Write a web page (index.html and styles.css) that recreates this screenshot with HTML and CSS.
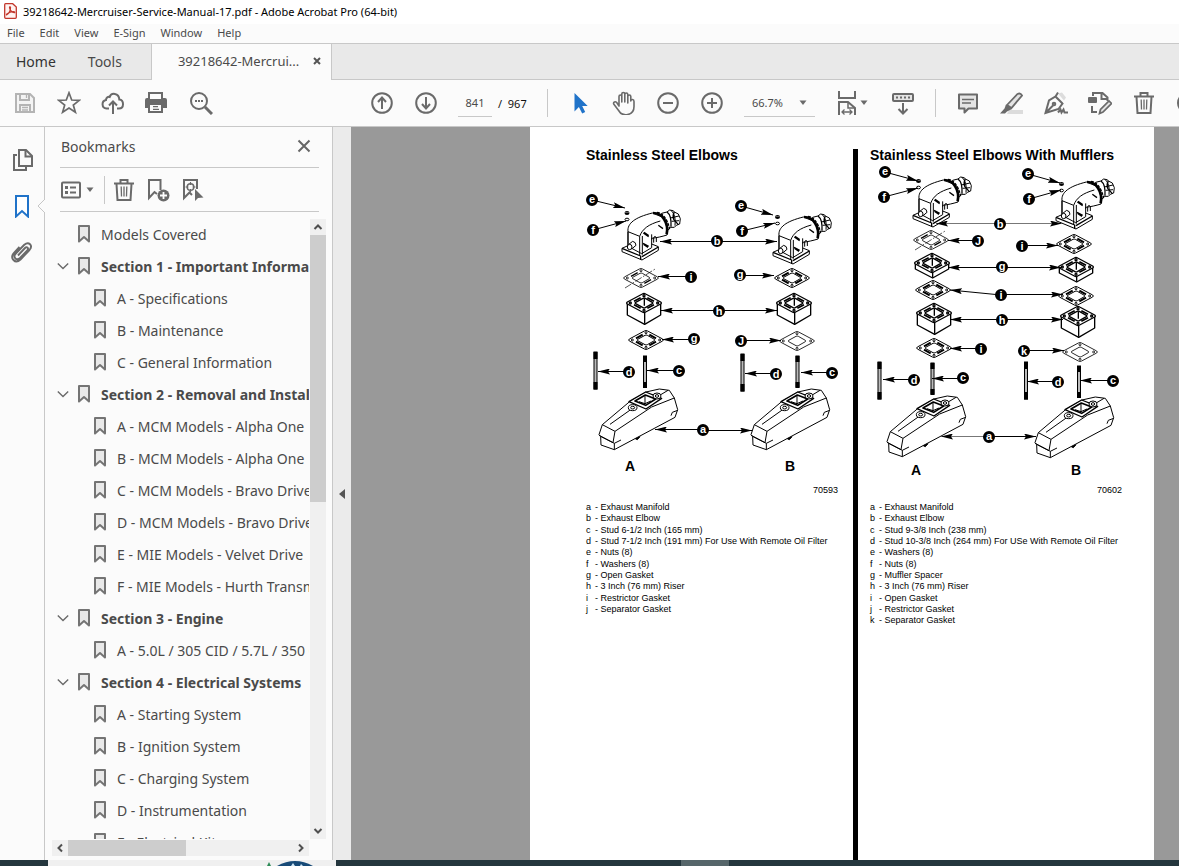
FILE: index.html
```html
<!DOCTYPE html>
<html lang="en">
<head>
<meta charset="utf-8">
<title>39218642-Mercruiser-Service-Manual-17.pdf - Adobe Acrobat Pro (64-bit)</title>
<link rel="stylesheet" href="styles.css">
</head>
<body>
<svg class="sprite" aria-hidden="true">
  <defs>
    <symbol id="i-mark" viewBox="0 0 14 20"><path d="M2 2h10v15.500l-5-4.500-5 4.500z" fill="#e9e9e9" stroke="#747474" stroke-width="2" stroke-linejoin="round"/></symbol>
    <symbol id="i-chev" viewBox="0 0 12 12"><path d="M.8 3.500 6 8.500 11.200 3.500" fill="none" stroke="#6a6a6a" stroke-width="1.400"/></symbol>
    <symbol id="i-caret" viewBox="0 0 8 6"><path d="M.5.500h7L4 5z" fill="#6a6a6a"/></symbol>
    <symbol id="i-trash" viewBox="0 0 24 24"><g fill="none" stroke="#6a6a6a" stroke-width="2"><path d="M2 5.500h20M8.500 5V2h7v3M4.500 6l1 16h13l1-16"/><path d="M9.200 8.500l.3 10M12 8.500v10M14.800 8.500l-.3 10" stroke-width="1.300"/></g></symbol>
    <marker id="head" viewBox="0 0 12 6" refX="12" refY="3" markerWidth="12" markerHeight="6" markerUnits="userSpaceOnUse" orient="auto"><path d="M0 0 12 3 0 6 2 3z"/></marker>

    <g id="elbow"><g transform="scale(.3333) translate(-127 -210)" fill="#fff" stroke="#000" stroke-width="3" stroke-linejoin="round">
      <path d="M246 220 262 216 270 210 280 212 286 217 296 222 302 236 300 252 290 256 284 262 272 262 266 270z"/>
      <path d="M262 216q14 10 12 44M284 216q-6 10-2 22l14 16" fill="none" stroke-width="4"/>
      <path d="M274 211q16 14 12 46M272 234l26-6M276 244l22-2" fill="none"/>
      <path d="M127 325 147 316 216 312 236 320v11l-49 29-60-25z"/>
      <path d="M127 325l56 23v11M187 350l49-29" fill="none" stroke-width="4"/>
      <path d="M145 275C142 250 166 232 218 219l34 14c13 20 14 35 10 52-16 5-30 8-46 10v28l-30 18-41-22z"/>
      <path d="M145 275l35 14v56M188 288v56M180 289c8-22 26-36 62-46M145 275v42M216 299v-16" fill="none"/>
      <path d="M220 219c14 0 26 6 33 18 9 14 12 28 8 46" fill="none" stroke-width="8"/>
      <path d="M232 217c14 2 30 16 38 50" fill="none" stroke-width="4" stroke-dasharray="9 3"/>
      <path d="M222 308v-14q4-10 8 0v12" fill="none"/>
      <path d="M191 279l16 11M236 256l14 10M190 310l17 9M193 277l14 10M192 313l13 9" stroke-width="4" fill="none"/>
      <path d="M145 315l14-11q10 2 10 12l-13 11z"/><ellipse cx="150" cy="321" rx="7" ry="8"/>
    </g></g>

    <g id="plate"><path d="M-50-3-5-27Q0-30 5-27L50-3Q54 0 50 3L5 27Q0 30-5 27L-50 3Q-54 0-50-3z"/><path d="M-25-2-3-14Q0-16 4-14L25-2Q28 0 25 2L4 14Q0 16-3 14L-25 2Q-28 0-25-2z"/><g fill="#fff"><circle cx="-41" r="3"/><circle cx="41" r="3"/><circle cy="-22" r="3"/><circle cy="22" r="3"/></g></g>
    <g id="gasket-thin"><g transform="scale(.3333)" fill="#fff" stroke="#000" stroke-width="2.500"><use href="#plate"/></g></g>
    <g id="gasket"><g transform="scale(.3333)" fill="#fff" stroke="#000" stroke-width="3"><use href="#plate"/><path d="M-30-5-10-16M10-16 30-5M-30 5-10 16M10 16 30 5" stroke-width="6"/></g></g>
    <g id="gasket-cut"><g transform="scale(.3333)" fill="#fff" stroke="#000" stroke-width="2.500"><use href="#plate"/><path d="M-30-5-10-16M10 16 30 5" stroke-width="4"/><path d="M-48 30 44-28" stroke-dasharray="22 5 5 5" stroke-width="2"/></g></g>
    <g id="riser"><g transform="scale(.3333)" fill="#fff" stroke="#000" stroke-width="4" stroke-linejoin="round"><path d="M-50 0v36l52 28 48-28V0z"/><path d="M2 28v34"/><use href="#plate"/><path d="M-30-5-10-16M10-16 30-5M-30 5-10 16M10 16 30 5" stroke-width="5"/><path d="M1-14v22"/></g></g>
    <g id="spacer"><g transform="scale(.3333)" fill="#fff" stroke="#000" stroke-width="4" stroke-linejoin="round"><path d="M-50 0v18l52 27 48-27V0z"/><path d="M2 28v16"/><use href="#plate"/><path d="M-30-5-10-16M10-16 30-5M-30 5-10 16M10 16 30 5" stroke-width="5"/><path d="M1-14v22"/></g></g>
    <g id="stud"><rect x="-1.500" width="3" height="37" fill="#bbb" stroke="#000"/><path d="M-2 0h4v7h-4zM-2 30h4v7.500h-4z"/></g>
    <g id="stud-short"><rect x="-1.500" width="3" height="31" fill="#bbb" stroke="#000"/><path d="M-2 0h4v6h-4zM-2 26h4v6h-4z"/></g>
    <g id="nuts"><ellipse rx="2.500" ry="2"/><path d="M-2-.5h4" stroke="#999" stroke-width=".6"/><ellipse cy="6.500" rx="2" ry="1.300" fill="#fff" stroke="#000"/></g>

    <g id="manifold"><g transform="scale(.3333) translate(-57 -208)" fill="#fff" stroke="#000" stroke-width="3" stroke-linejoin="round">
      <path d="M160 354l12 6 8-9z" fill="#000"/>
      <path d="M57 345 67 315 150 245 198 217 238 208 268 212 283 235 293 270 285 293 103 390 63 376 62 350z"/>
      <path d="M67 315l38 20-6 34-42-22M105 335 215 262 283 235M62 350l41 21v19M103 371l20-10M273 288l4-10 16-6M90 314l62-44M215 225l24 2 25-15" fill="none"/>
      <path d="M147 246 197 217 245 236 198 268z" stroke-width="4"/>
      <path d="M165 244l31-18 31 12-30 19z" fill="none" stroke-width="5"/><path d="M195 228v24l-18-6M195 252l18-8" fill="none"/>
      <ellipse cx="158" cy="264" rx="13" ry="9"/><ellipse cx="158" cy="264" rx="6" ry="4"/>
      <ellipse cx="231" cy="229" rx="12" ry="9"/><ellipse cx="231" cy="229" rx="5" ry="4"/>
    </g></g>
  </defs>
</svg>

<div class="app">
  <header class="titlebar">
    <svg class="app-icon" viewBox="0 0 13 16"><path d="M1.500.7h7.200L12.300 4v10.300q0 1-1 1H1.700q-1 0-1-1V1.700q0-1 .8-1z" fill="#fff3f1" stroke="#c2372c" stroke-width="1.300"/><path d="M2.800 11.800c2-1 4-4.500 3.700-7.300 0-1-1.100-.9-1 0 .2 2.400 2.300 5 4.700 5.200 1-.1.600-1-.3-1-2.200-.1-5 .8-7 2.200-.7.600-.5 1.100-.1.900z" fill="none" stroke="#c2372c" stroke-width="1.200"/></svg>
    <span>39218642-Mercruiser-Service-Manual-17.pdf - Adobe Acrobat Pro (64-bit)</span>
  </header>

  <nav class="menubar" aria-label="Menu">
    <button>File</button><button>Edit</button><button>View</button><button>E-Sign</button><button>Window</button><button>Help</button>
  </nav>

  <div class="tabs">
    <button class="tab-home">Home</button>
    <button class="tab-tools">Tools</button>
    <div class="tab-doc">
      <button>39218642-Mercrui...</button>
      <button class="tab-close" aria-label="Close tab"><svg viewBox="0 0 8 8"><path d="M1 1l6 6M7 1 1 7" stroke="#555" stroke-width="2"/></svg></button>
    </div>
  </div>

  <div class="toolbar">
    <div class="group">
      <button aria-label="Save"><svg viewBox="0 0 24 24"><g fill="none" stroke="#b4b4b4" stroke-width="2"><path d="M3 3h14l4 4v14H3z" fill="#f4f4f4"/><path d="M7 3v6h9V3M7 21v-7h10v7"/><path d="M13.500 4v3M9 16.500h6M9 19h6" stroke-width="1.300"/></g></svg></button>
      <button aria-label="Star"><svg viewBox="0 0 24 24"><path d="M12 1.800l2.700 7.200 7.600.3-6 4.700 2.100 7.300-6.400-4.200-6.400 4.200L7.700 14l-6-4.700 7.600-.3z" fill="none" stroke="#6a6a6a" stroke-width="1.700"/></svg></button>
      <button aria-label="Upload"><svg viewBox="0 0 24 24"><g fill="none" stroke="#6a6a6a" stroke-width="2"><path d="M8 17.500H5.500A4.300 4.300 0 0 1 5 9c0-2.500 2.200-3.600 3.700-3C10 1.500 18 1.500 18.300 8.500c5 .5 5 9-.3 9h-2"/><path d="M12 23V11M8 14.500l4-4 4 4"/></g></svg></button>
      <button aria-label="Print"><svg viewBox="0 0 24 24"><path d="M3 1h15v6h2q2 0 2 2v8h-4v5H3v-5H0V9q0-2 2-2h1z" fill="#6a6a6a"/><path d="M5 3h11v5H5zM5 14h11v6H5z" fill="#fbfbfb"/><path d="M8 15.700h5M8 18.300h6" stroke="#6a6a6a" stroke-width="1.200"/></svg></button>
      <button aria-label="Search"><svg viewBox="0 0 24 24"><g fill="none" stroke="#6a6a6a"><circle cx="10" cy="10" r="8" stroke-width="2"/><path d="M16 16l7 7" stroke-width="3"/><path d="M6 10h2M9 10h2M12 10h2" stroke-width="1.800"/></g></svg></button>
    </div>
    <div class="group group-pages">
      <button aria-label="Previous page"><svg viewBox="0 0 24 24"><g fill="none" stroke="#6a6a6a" stroke-width="2"><circle cx="12" cy="12" r="9.800"/><path d="M12 18V7M8 11l4-4.500 4 4.500"/></g></svg></button>
      <button aria-label="Next page"><svg viewBox="0 0 24 24"><g fill="none" stroke="#6a6a6a" stroke-width="2"><circle cx="12" cy="12" r="9.800"/><path d="M12 6v11M8 13l4 4.500 4-4.500"/></g></svg></button>
      <input id="page-no" class="page-no" value="841"><label class="page-total" for="page-no">/&nbsp; 967</label>
    </div>
    <span class="sep"></span>
    <div class="group group-view">
      <button aria-label="Select"><svg viewBox="0 0 24 24"><path d="M6.500 2v18.500l4.400-4.500 3.300 6.500 3-1.500-3-6h5.500z" fill="#2073c9"/></svg></button>
      <button aria-label="Hand"><svg viewBox="0 0 24 24"><path d="M7 15V5.500c0-2 2.800-2 2.800 0V11 3c0-2 3-2 3 0v8V3.500c0-2 3-2 3 0V12 5.500c0-2 3-2 3 0V10c0-2 3.200-2 3.200.5v5c0 10-12 10-15 4.500L1.700 13c-.7-2 1.700-3 3-1.500z" fill="none" stroke="#6a6a6a" stroke-width="1.600" stroke-linejoin="round"/></svg></button>
      <button aria-label="Zoom out"><svg viewBox="0 0 24 24"><g fill="none" stroke="#6a6a6a" stroke-width="2"><circle cx="12" cy="12" r="9.800"/><path d="M7 12h10"/></g></svg></button>
      <button aria-label="Zoom in"><svg viewBox="0 0 24 24"><g fill="none" stroke="#6a6a6a" stroke-width="2"><circle cx="12" cy="12" r="9.800"/><path d="M7 12h10M12 7v10"/></g></svg></button>
    </div>
    <div class="zoom">
      <select aria-label="Zoom level"><option>66.7%</option></select>
      <svg class="caret"><use href="#i-caret"/></svg>
    </div>
    <div class="group group-fit">
      <button aria-label="Fit width" class="wide"><svg viewBox="0 0 24 26"><g fill="none" stroke="#6a6a6a" stroke-width="2"><path d="M4 1v7h16V1M4 25V12h9l7 6v7"/><path d="M13 12v6h7" stroke-width="1.500"/><path d="M7 22h10M9.500 19.500 7 22l2.500 2.500M14.500 19.500 17 22l-2.500 2.500" stroke-width="1.300"/></g></svg><svg class="caret"><use href="#i-caret"/></svg></button>
      <button aria-label="Scroll mode"><svg viewBox="0 0 24 24"><g fill="none" stroke="#6a6a6a" stroke-width="2"><rect x="2" y="3" width="20" height="7" rx="1" fill="#e4e4e4"/><path d="M5 6.500h14" stroke-dasharray="2 2"/><path d="M12 12v10M7.500 18l4.500 4.500 4.500-4.500"/></g></svg></button>
    </div>
    <span class="sep"></span>
    <div class="group group-edit">
      <button aria-label="Comment"><svg viewBox="0 0 24 24"><path d="M3 3.500h18v14h-8.500l-4 4v-4H3z" fill="#e4e4e4" stroke="#6a6a6a" stroke-width="2" stroke-linejoin="round"/><path d="M6 8.500h12M6 12h9" stroke="#6a6a6a" stroke-width="1.500"/></svg></button>
      <button aria-label="Highlight"><svg viewBox="0 0 24 24"><path d="M9 19h14v4H7z" fill="#dcdcdc"/><path d="M7 14 17.500 3q3-1.500 4.500 1.500L11.500 17z" fill="#e4e4e4" stroke="#6a6a6a" stroke-width="1.800"/><path d="M6 13.500 12 18l-5 2.500-2 2H0l4.500-5z" fill="#6a6a6a"/></svg></button>
      <button aria-label="Sign"><svg viewBox="0 0 24 24"><path d="M14 2.500l4-1 4 5-2 3z" fill="#dcdcdc"/><g fill="none" stroke="#6a6a6a" stroke-width="2"><path d="M11.500 5.500l7 7-4 5.500L1.500 22 5 9.500zM14 1.500l-2.500 4 7 7M2 21.500l7-7"/><circle cx="10" cy="13" r="1.300"/><path d="M14 21.500l2.500-3 1 3 2-3 1 3H24"/></g></svg></button>
      <button aria-label="Edit"><svg viewBox="0 0 24 24"><g fill="none" stroke="#6a6a6a" stroke-width="2"><path d="M5 5V2h9.500l5 4.500V10M4 15v6h5M13.500 2.500V8h6"/><path d="M11.500 22.500l1-4L21 10l2.500 2.500L15 21z" fill="#e4e4e4" stroke-width="1.700"/></g><rect x="0" y="6" width="9" height="6" rx="1" fill="#6a6a6a"/></svg></button>
      <button aria-label="Delete"><svg><use href="#i-trash"/></svg></button>
      <button aria-label="Rotate"><svg viewBox="0 0 24 24"><circle cx="12" cy="12" r="10" fill="none" stroke="#6a6a6a" stroke-width="2"/></svg></button>
    </div>
  </div>

  <main class="work">
    <aside class="rail">
      <button aria-label="Pages"><svg viewBox="0 0 24 24"><g fill="none" stroke="#6a6a6a" stroke-width="2"><path d="M9 2h7l6 6v10H9z"/><path d="M15.500 2v6.500H22M7 7H4v15h12v-3"/></g></svg></button>
      <button aria-label="Bookmarks"><svg viewBox="0 0 24 24"><path d="M6 2h12v20.500L12 17l-6 5.500z" fill="#fff" stroke="#2073c9" stroke-width="2"/></svg></button>
      <button aria-label="Attachments"><svg viewBox="0 0 24 24"><path d="M8 15.500l7-7.500c2-2 4 .5 2.300 2.300L10 18c-3.500 3.500-7.500-1-4.200-4.500l8.500-8.700c4.500-4 9 .7 5.200 5.200L10.500 19.500C5 24.500-.5 18 4 13l5.500-6" fill="none" stroke="#6a6a6a" stroke-width="1.900"/></svg></button>
      <svg class="notch" viewBox="0 0 8 14"><path d="M8 0 1 7l7 7" fill="#fbfbfb" stroke="#c6c6c6"/></svg>
    </aside>

    <section class="panel">
      <div class="panel-head">
        <h2>Bookmarks</h2>
        <button aria-label="Close panel"><svg viewBox="0 0 14 14"><path d="M1.500 1.500l11 11M12.500 1.500l-11 11" stroke="#666" stroke-width="2"/></svg></button>
      </div>
      <div class="panel-tools">
        <button aria-label="Options" class="opts"><svg viewBox="0 0 20 18"><rect x="1" y="1.500" width="18" height="15" rx="1" fill="none" stroke="#6a6a6a" stroke-width="2"/><path d="M4 6.500h3M4 11.500h3" stroke="#6a6a6a" stroke-width="3"/><path d="M9 6.500h6M9 11.500h6" stroke="#6a6a6a" stroke-width="1.800"/></svg><svg class="caret"><use href="#i-caret"/></svg></button>
        <button aria-label="Delete bookmark" class="del"><svg><use href="#i-trash"/></svg></button>
        <button aria-label="New bookmark"><svg viewBox="0 0 24 24"><path d="M11 16l-2.500-2L3 20V2h11.500v10" fill="none" stroke="#6a6a6a" stroke-width="2"/><circle cx="17.500" cy="17.500" r="6" fill="#6a6a6a"/><path d="M17.500 14v7M14 17.500h7" stroke="#fff" stroke-width="1.800"/></svg></button>
        <button aria-label="Find bookmark"><svg viewBox="0 0 24 24"><g fill="none" stroke="#6a6a6a"><path d="M12 17l-2.500-2.500L4 20V2h13v9" stroke-width="2"/><circle cx="10.500" cy="9" r="3.300" stroke-width="1.500"/><path d="M10.500 4v3M10.500 11v3M5.500 9h3M12.500 9h3" stroke-width="1.200"/></g><path d="M15 11v12l3-3 5.500-.5z" fill="#6a6a6a"/></svg></button>
      </div>
      <div class="tree-box">
        <ul class="tree">
          <li><a href="#"><svg><use href="#i-mark"/></svg>Models Covered</a></li>
          <li class="open"><a href="#"><svg class="chev"><use href="#i-chev"/></svg><svg><use href="#i-mark"/></svg>Section 1 - Important Information</a>
            <ul>
              <li><a href="#"><svg><use href="#i-mark"/></svg>A - Specifications</a></li>
              <li><a href="#"><svg><use href="#i-mark"/></svg>B - Maintenance</a></li>
              <li><a href="#"><svg><use href="#i-mark"/></svg>C - General Information</a></li>
            </ul></li>
          <li class="open"><a href="#"><svg class="chev"><use href="#i-chev"/></svg><svg><use href="#i-mark"/></svg>Section 2 - Removal and Installation</a>
            <ul>
              <li><a href="#"><svg><use href="#i-mark"/></svg>A - MCM Models - Alpha One</a></li>
              <li><a href="#"><svg><use href="#i-mark"/></svg>B - MCM Models - Alpha One</a></li>
              <li><a href="#"><svg><use href="#i-mark"/></svg>C - MCM Models - Bravo Drives</a></li>
              <li><a href="#"><svg><use href="#i-mark"/></svg>D - MCM Models - Bravo Drives</a></li>
              <li><a href="#"><svg><use href="#i-mark"/></svg>E - MIE Models - Velvet Drive</a></li>
              <li><a href="#"><svg><use href="#i-mark"/></svg>F - MIE Models - Hurth Transmission</a></li>
            </ul></li>
          <li class="open"><a href="#"><svg class="chev"><use href="#i-chev"/></svg><svg><use href="#i-mark"/></svg>Section 3 - Engine</a>
            <ul>
              <li><a href="#"><svg><use href="#i-mark"/></svg>A - 5.0L / 305 CID / 5.7L / 350 CID</a></li>
            </ul></li>
          <li class="open"><a href="#"><svg class="chev"><use href="#i-chev"/></svg><svg><use href="#i-mark"/></svg>Section 4 - Electrical Systems</a>
            <ul>
              <li><a href="#"><svg><use href="#i-mark"/></svg>A - Starting System</a></li>
              <li><a href="#"><svg><use href="#i-mark"/></svg>B - Ignition System</a></li>
              <li><a href="#"><svg><use href="#i-mark"/></svg>C - Charging System</a></li>
              <li><a href="#"><svg><use href="#i-mark"/></svg>D - Instrumentation</a></li>
              <li><a href="#"><svg><use href="#i-mark"/></svg>E - Electrical Kits</a></li>
            </ul></li>
        </ul>
        <div class="vbar">
          <svg viewBox="0 0 16 16"><path d="M4.500 10 8 6.500l3.500 3.500" fill="none" stroke="#505050" stroke-width="2"/></svg>
          <span class="vthumb"></span>
          <svg viewBox="0 0 16 16"><path d="M4.500 6 8 9.500 11.500 6" fill="none" stroke="#505050" stroke-width="2"/></svg>
        </div>
        <div class="hbar">
          <svg viewBox="0 0 16 16"><path d="M10 4.500 6.500 8l3.500 3.500" fill="none" stroke="#505050" stroke-width="2"/></svg>
          <span class="hthumb"></span>
          <svg viewBox="0 0 16 16"><path d="M6 4.500 9.500 8 6 11.500" fill="none" stroke="#505050" stroke-width="2"/></svg>
        </div>
      </div>
    </section>

    <button class="splitter" aria-label="Collapse panel"><svg viewBox="0 0 6 10"><path d="M6 0v10L0 5z" fill="#555"/></svg></button>

    <section class="viewer">
      <article class="page">
        <div class="col col-left">
          <h1>Stainless Steel Elbows</h1>
          <svg class="figure" viewBox="586 163 260 338">
            <use href="#stud" x="595.500" y="352"/><use href="#stud-short" x="645" y="356"/><use href="#stud" x="742.500" y="354"/><use href="#stud-short" x="797.500" y="356"/>
            <use href="#manifold" x="599" y="389"/><use href="#manifold" x="751" y="389"/>
            <use href="#elbow" x="622" y="210"/><use href="#elbow" x="773" y="214"/>
            <use href="#gasket-cut" x="641" y="278"/><use href="#gasket" x="792" y="278"/>
            <use href="#riser" x="644" y="303"/><use href="#riser" x="794" y="303"/>
            <use href="#gasket" x="646" y="340"/><use href="#gasket-thin" x="797" y="341"/>
            <use href="#nuts" x="627" y="213"/><use href="#nuts" x="777.500" y="217"/>
            <g class="arrows">
              <path d="M592 200 625 208"/><path d="M593 230 626 221"/><path d="M741 206 773 215"/><path d="M742 231 775 223"/>
              <path d="M717 241.500H660"/><path d="M717 241.500H777"/><path d="M691 276.500H658"/><path d="M740 275.500H774"/>
              <path d="M719 310.500H661"/><path d="M719 310.500H777"/><path d="M694 339.500H662"/><path d="M741 340.500H781"/>
              <path d="M629 371.500H598"/><path d="M679 370.500H647"/><path d="M776 373.500H745"/><path d="M832 372.500H801"/>
              <path d="M703 429.500H655"/><path d="M703 430.500H752"/>
            </g>
            <path class="dots" d="M592 200h0M593 230h0M741 206h0M742 231h0M717 241h0M691 277h0M740 275h0M719 311h0M694 339h0M741 341h0M629 372h0M679 371h0M776 374h0M832 373h0M703 430h0"/>
            <g class="keys">
              <text x="592" y="203">e</text><text x="593" y="234">f</text><text x="741" y="209">e</text><text x="742" y="235">f</text><text x="717" y="245">b</text><text x="691" y="281">i</text><text x="740" y="278">g</text><text x="719" y="315">h</text><text x="694" y="342">g</text><text x="741" y="345">J</text><text x="629" y="376">d</text><text x="679" y="374">c</text><text x="776" y="378">d</text><text x="832" y="376">c</text><text x="703" y="433">a</text>
            </g>
            <text class="side" x="630" y="471">A</text><text class="side" x="790" y="471">B</text>
            <text class="number" x="838" y="493">70593</text>
          </svg>
          <ul class="legend">
            <li><b>a</b>- Exhaust Manifold</li><li><b>b</b>- Exhaust Elbow</li><li><b>c</b>- Stud 6-1/2 Inch (165 mm)</li><li><b>d</b>- Stud 7-1/2 Inch (191 mm) For Use With Remote Oil Filter</li><li><b>e</b>- Nuts (8)</li><li><b>f</b>- Washers (8)</li><li><b>g</b>- Open Gasket</li><li><b>h</b>- 3 Inch (76 mm) Riser</li><li><b>i</b>- Restrictor Gasket</li><li><b>j</b>- Separator Gasket</li>
          </ul>
        </div>
        <div class="rule"></div>
        <div class="col col-right">
          <h1>Stainless Steel Elbows With Mufflers</h1>
          <svg class="figure" viewBox="870 163 260 338">
            <use href="#stud" x="879.500" y="362"/><use href="#stud-short" x="932.500" y="363"/><use href="#stud" x="1026" y="362"/><use href="#stud-short" x="1079" y="366"/>
            <use href="#manifold" x="887" y="396"/><use href="#manifold" x="1035" y="397"/>
            <use href="#elbow" x="913" y="177"/><use href="#elbow" x="1056" y="179"/>
            <use href="#gasket-cut" x="931" y="240"/><use href="#gasket" x="1074" y="244"/>
            <use href="#spacer" x="932" y="263"/><use href="#spacer" x="1076" y="267"/>
            <use href="#gasket" x="933" y="290"/><use href="#gasket" x="1076" y="296"/>
            <use href="#riser" x="934" y="313"/><use href="#riser" x="1078" y="316"/>
            <use href="#gasket" x="934" y="348"/><use href="#gasket-thin" x="1080" y="352"/>
            <use href="#nuts" x="918.500" y="181"/><use href="#nuts" x="1061.500" y="184"/>
            <g class="arrows">
              <path d="M885 172 918 181"/><path d="M884 197 918 188"/><path d="M1028 174 1060 183"/><path d="M1029 199 1061 190"/>
              <path d="M1000 223.500H936" class="faint"/><path d="M1000 223.500H1062" class="faint"/><path d="M978 240.500H948"/><path d="M1022 245.500H1058"/>
              <path d="M1002 267.500H948"/><path d="M1002 267.500H1061"/><path d="M1001 295 950 290"/><path d="M1001 294.500H1063"/>
              <path d="M1002 319.500H950"/><path d="M1002 319.500H1063"/><path d="M980 348.500H950"/><path d="M1023 350.500H1064"/>
              <path d="M914 379.500H883"/><path d="M963 378.500H932"/><path d="M1058 381.500H1027"/><path d="M1113 380.500H1080"/>
              <path d="M989 436.500H941" class="faint"/><path d="M989 436.500H1036"/>
            </g>
            <path class="dots" d="M885 172h0M884 197h0M1028 174h0M1029 199h0M1000 224h0M978 241h0M1022 246h0M1002 267h0M1001 295h0M1002 320h0M981 349h0M1024 351h0M914 380h0M963 378h0M1058 382h0M1113 381h0M989 437h0"/>
            <g class="keys">
              <text x="885" y="175">e</text><text x="884" y="201">f</text><text x="1028" y="177">e</text><text x="1029" y="203">f</text><text x="1000" y="228">b</text><text x="978" y="245">J</text><text x="1022" y="250">i</text><text x="1002" y="270">g</text><text x="1001" y="299">i</text><text x="1002" y="324">h</text><text x="981" y="353">i</text><text x="1024" y="355">k</text><text x="914" y="384">d</text><text x="963" y="381">c</text><text x="1058" y="386">d</text><text x="1113" y="384">c</text><text x="989" y="440">a</text>
            </g>
            <text class="side" x="916" y="475">A</text><text class="side" x="1076" y="475">B</text>
            <text class="number" x="1122" y="493">70602</text>
          </svg>
          <ul class="legend">
            <li><b>a</b>- Exhaust Manifold</li><li><b>b</b>- Exhaust Elbow</li><li><b>c</b>- Stud 9-3/8 Inch (238 mm)</li><li><b>d</b>- Stud 10-3/8 Inch (264 mm) For USe With Remote Oil Filter</li><li><b>e</b>- Washers (8)</li><li><b>f</b>- Nuts (8)</li><li><b>g</b>- Muffler Spacer</li><li><b>h</b>- 3 Inch (76 mm) Riser</li><li><b>i</b>- Open Gasket</li><li><b>j</b>- Restrictor Gasket</li><li><b>k</b>- Separator Gasket</li>
          </ul>
        </div>
      </article>
    </section>
  </main>

  <footer class="taskbar">
    <div class="task-search"><svg viewBox="0 0 60 6"><path d="M8 6l2-4 2 4z" fill="#2e8b57"/><path d="M18 6Q36-4 54 6z" fill="#174a77"/><path d="M32 6l2-3 2 3M41 6l1-2 2 2" fill="#cfe6f5"/></svg></div>
    <div class="task-active"></div>
  </footer>
</div>
</body>
</html>
```
FILE: styles.css
```css
* { box-sizing: border-box; }

body {
  margin: 0;
  font-family: "Noto Sans", "Open Sans", sans-serif;
  font-size: 11px;
  color: #4a4a4a;
}

button, input, select {
  margin: 0;
  padding: 0;
  border: 0;
  background: none;
  font: inherit;
  color: inherit;
}

ul { list-style: none; margin: 0; padding: 0; }
h1, h2 { margin: 0; }

.sprite { position: absolute; width: 0; height: 0; }

.app {
  display: flex;
  flex-direction: column;
  height: 100vh;
  overflow: hidden;
  background: #fbfbfb;
}

.titlebar {
  display: flex;
  align-items: center;
  gap: 6px;
  height: 24px;
  padding: 0 0 2px 4px;
  background: #fff;
  color: #000;
  white-space: nowrap;
}
.app-icon { width: 13px; height: 16px; }

.menubar { display: flex; gap: 15px; height: 19px; padding: 0 0 2px 7px; }

.tabs {
  display: flex;
  height: 37px;
  border-top: 1px solid #c8c8c8;
  background: #e9e9e9;
  box-shadow: inset 0 -1px #c8c8c8;
  font-size: 14px;
}
.tabs > * { padding-bottom: 2px; }
.tab-home { padding-left: 16px; padding-right: 16px; color: #333; }
.tab-tools { padding-left: 16px; padding-right: 29px; }
.tab-doc {
  display: flex;
  align-items: center;
  gap: 14px;
  width: 181px;
  padding-left: 26px;
  border: solid #c8c8c8;
  border-width: 0 1px;
  background: #fbfbfb;
  font-size: 13px;
  white-space: nowrap;
}
.tab-close { display: flex; }
.tab-close svg { width: 8px; height: 8px; }

.toolbar {
  display: flex;
  align-items: center;
  height: 47px;
  padding-left: 3px;
  border-bottom: 1px solid #c8c8c8;
  overflow: hidden;
}
.toolbar > * { flex: none; }
.group { display: flex; align-items: center; }
.group button { display: flex; flex: none; align-items: center; justify-content: center; width: 44px; height: 44px; }
.group svg { width: 24px; height: 24px; }
.group-pages { margin-left: 137px; }
.page-no { width: 34px; height: 28px; margin: 0 6px 0 10px; border-bottom: 1px solid #c8c8c8; text-align: center; }
.page-total { color: #111; width: 49px; }
.sep { width: 1px; height: 28px; background: #c8c8c8; }
.group-view { margin-left: 10px; }
.zoom { position: relative; width: 71px; margin-left: 10px; }
.zoom select { width: 100%; height: 28px; padding-left: 8px; border-bottom: 1px solid #c8c8c8; appearance: none; }
.app svg.caret { width: 8px; height: 6px; }
.zoom .caret { position: absolute; right: 8px; top: 11px; }
.group-fit { margin-left: 14px; gap: 8px; }
.group-fit .wide { gap: 1px; }
.group-fit .wide svg:first-child { height: 26px; }
.group-fit + .sep { margin-left: 10px; }
.group-edit { margin-left: 10px; }

.work { display: flex; flex: 1; min-height: 0; }

.rail {
  position: relative;
  display: flex;
  flex-direction: column;
  align-items: center;
  gap: 22px;
  width: 45px;
  padding-top: 21px;
  border-right: 1px solid #c8c8c8;
}
.rail button { display: flex; width: 24px; height: 24px; }
.rail svg { width: 24px; height: 24px; }
.rail svg.notch { position: absolute; right: -1px; top: 72px; width: 8px; height: 14px; }

.panel { display: flex; flex-direction: column; width: 288px; padding: 0 6px 4px 7px; border-right: 1px solid #c8c8c8; }
.panel-head {
  display: flex;
  align-items: center;
  justify-content: space-between;
  height: 41px;
  margin: 0 7px 0 8px;
  padding: 0 8px 2px 1px;
  border-bottom: 1px solid #c8c8c8;
}
.panel-head h2 { font-size: 14px; font-weight: 400; }
.panel-head button, .panel-tools button { display: flex; align-items: center; }
.panel-head svg { width: 14px; height: 14px; }
.panel-tools {
  display: flex;
  align-items: center;
  gap: 10px;
  height: 44px;
  margin: 0 7px 7px 8px;
  padding-left: 1px;
  border-bottom: 1px solid #c8c8c8;
}
.panel-tools svg { width: 24px; height: 24px; }
.panel-tools .opts { gap: 5px; }
.panel-tools .opts svg:first-child { width: 20px; height: 18px; }
.panel-tools .del { height: 28px; padding-left: 7px; border-left: 1px solid #c8c8c8; }

.tree-box {
  display: grid;
  grid-template: minmax(0, 1fr) 16px / minmax(0, 1fr) 16px;
  gap: 1px;
  flex: 1;
  min-height: 0;
}
.tree { overflow: hidden; font-size: 14px; }
.tree a {
  display: flex;
  align-items: center;
  height: 32px;
  padding: 0 0 2px 25px;
  color: inherit;
  text-decoration: none;
  white-space: nowrap;
}
.tree svg { flex: none; width: 14px; height: 20px; margin-right: 10px; }
.tree svg.chev { width: 12px; height: 12px; margin-right: 8px; }
.tree .open > a { padding-left: 5px; font-weight: 700; }
.tree ul a { padding-left: 41px; }

.vbar, .hbar { display: flex; background: #f0f0f0; }
.vbar { flex-direction: column; justify-content: space-between; }
.vbar svg, .hbar svg { flex: none; width: 16px; height: 16px; }
.vthumb { height: 43%; margin-bottom: auto; background: #cdcdcd; }
.hthumb { width: 46%; margin-right: auto; background: #cdcdcd; }

.splitter { display: flex; align-items: center; justify-content: center; width: 18px; background: #ebebeb; }
.splitter svg { width: 6px; height: 10px; }

.viewer { display: flex; flex: 1; min-width: 0; padding: 0 25px 0 179px; background: #999; overflow: hidden; }
.page {
  display: grid;
  grid-template-columns: minmax(0, 323fr) 5px minmax(0, 296fr);
  flex: 1;
  background: #fff;
  font-family: "Liberation Sans", Arial, sans-serif;
  color: #000;
}
.col { padding-top: 20px; }
.col-left { padding-left: 56px; }
.col-right { padding-left: 12px; }
.rule { margin-top: 22px; background: #000; }
.page h1 { font-size: 14px; line-height: 16px; white-space: nowrap; }
.figure { display: block; width: 260px; height: 338px; }
.arrows path { fill: none; stroke: #000; marker-end: url(#head); }
.arrows .faint { stroke: #777; }
.dots { fill: none; stroke: #000; stroke-width: 12px; stroke-linecap: round; }
.keys text { fill: #fff; font-size: 11px; font-weight: 700; text-anchor: middle; }
.side { font-size: 14px; font-weight: 700; text-anchor: middle; }
.number { font-size: 9px; text-anchor: end; }
.legend { padding-top: 1px; font-size: 9px; line-height: 1.26; white-space: nowrap; }
.legend li { display: flex; }
.legend b { width: 9px; font-weight: 400; }

.taskbar { display: flex; height: 6px; background: #24363d; }
.task-search { width: 288px; margin-left: 48px; padding-left: 211px; background: #f0f0f0; }
.task-search svg { display: block; width: 60px; height: 6px; }
.task-active { width: 48px; margin-left: 345px; background: #56666a; }
```
